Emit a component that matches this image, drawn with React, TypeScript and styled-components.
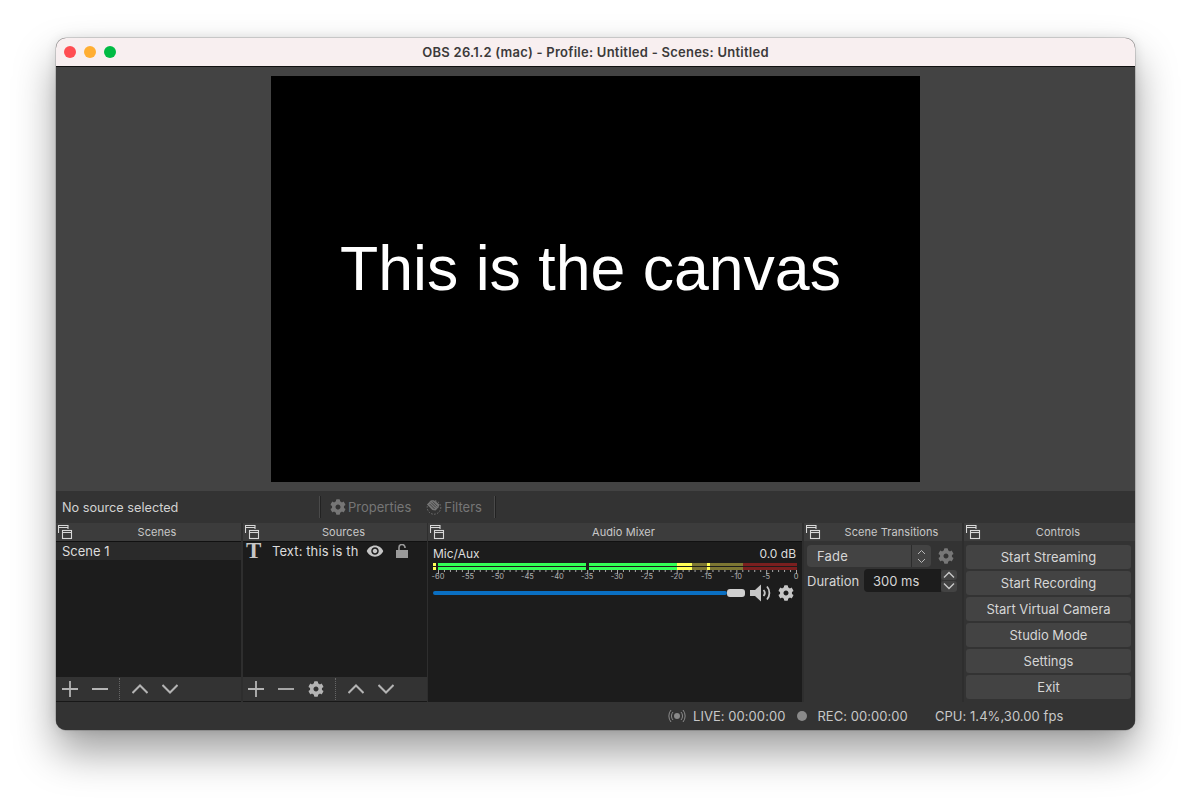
import React from "react";
import styled, { createGlobalStyle } from "styled-components";
import { FaCog } from "react-icons/fa";
import { MdVisibility } from "react-icons/md";

const Global = createGlobalStyle`
  html, body { margin: 0; padding: 0; background: #fff; }
  body { width: 1191px; height: 804px; overflow: hidden; font-family: Inter, "Liberation Sans", sans-serif; }
`;
const Page = styled.div`
  padding: 38px 56px 0;
  width: 1191px;
  height: 804px;
  box-sizing: border-box;
`;
const Win = styled.div`
  width: 1079px;
  height: 692px;
  border-radius: 10px;
  overflow: hidden;
  display: flex;
  flex-direction: column;
  box-shadow: 0 0 0 0.5px rgba(0,0,0,.28), 0 22px 42px rgba(0,0,0,.38), 0 0 12px rgba(0,0,0,.1);
  background: #333;
`;
const TitleBar = styled.div`
  height: 28px;
  flex: none;
  background: #f8eff0;
  border-bottom: 1px solid #111;
  position: relative;
  display: flex;
  align-items: center;
  justify-content: center;
  font-size: 13px;
  letter-spacing: .25px;
  font-weight: 600;
  color: #3c3a3a;
`;
const Lights = styled.div`
  position: absolute;
  left: 8px;
  top: 8px;
  display: flex;
  gap: 8px;
`;
const Light = styled.span<{ $c: string }>`
  width: 12px;
  height: 12px;
  border-radius: 50%;
  background: ${p => p.$c};
`;
const Preview = styled.div`
  height: 424px;
  flex: none;
  background: #434343;
  box-sizing: border-box;
  padding-top: 9px;
  display: flex;
  justify-content: center;
  align-items: flex-start;
`;
const Canvas = styled.div`
  width: 649px;
  height: 406px;
  background: #000;
  color: #fff;
  font-family: "Liberation Sans", Arial, sans-serif;
  font-size: 62.6px;
  display: flex;
  justify-content: center;
  align-items: center;
  padding: 0 10px 23px 0;
  box-sizing: border-box;
`;
const ContextBar = styled.div`
  height: 32px;
  flex: none;
  background: #333;
  display: flex;
  align-items: center;
  font-size: 13px;
  color: #d2d2d2;
  padding: 0 0 0 6px;
  box-sizing: border-box;
`;
const ContextLabel = styled.span`
  width: 257px;
  flex: none;
  white-space: nowrap;
  font-size: 12.7px;
`;
const Grip = styled.span<{ $ml?: number }>`
  width: 2px;
  height: 22px;
  flex: none;
  box-sizing: border-box;
  background: #222;
  border-left: 1px solid #4a4a4a;
  margin-left: ${p => p.$ml ?? 0}px;
`;
const DimBtn = styled.span<{ $ml: number }>`
  display: flex;
  align-items: center;
  gap: 2px;
  color: #767676;
  margin-left: ${p => p.$ml}px;
  svg { color: #767676; flex: none; }
`;
const Docks = styled.div`
  height: 179px;
  flex: none;
  display: flex;
  background: #2e2e2e;
`;
const Dock = styled.div<{ $w: number; $gap: number }>`
  width: ${p => p.$w}px;
  margin-right: ${p => p.$gap}px;
  flex: none;
  display: flex;
  flex-direction: column;
`;
const DockTitle = styled.div`
  height: 18px;
  flex: none;
  background: #3c3c3c;
  position: relative;
  display: flex;
  align-items: center;
  justify-content: center;
  font-size: 11px;
  letter-spacing: .07px;
  color: #c8c8c8;
  padding-left: 17px;
  box-sizing: border-box;
`;
const FloatIcon = styled.svg`
  position: absolute;
  left: 2px;
  top: 1px;
`;
const ListBody = styled.div`
  height: 136px;
  flex: none;
  background: #1c1c1c;
  border-top: 1px solid #111;
  box-sizing: border-box;
  font-size: 13px;
  color: #dcdcdc;
`;
const SceneRow = styled.div`
  height: 18px;
  background: #2a2a2a;
  display: flex;
  align-items: center;
  padding-left: 6px;
`;
const SourceRow = styled.div`
  height: 18px;
  display: flex;
  align-items: center;
  padding-left: 3px;
`;
const TGlyph = styled.span`
  font-family: "Liberation Serif", serif;
  font-weight: 700;
  font-size: 23px;
  line-height: 18px;
  color: #c6c6c6;
  width: 26px;
  flex: none;
`;
const SourceName = styled.span`
  width: 86px;
  overflow: hidden;
  white-space: nowrap;
  flex: none;
  letter-spacing: .1px;
`;
const RowIcons = styled.span`
  display: flex;
  align-items: center;
  gap: 12px;
  margin-left: 8px;
  color: #c6c6c6;
`;
const Toolbar = styled.div<{ $shift?: boolean }>`
  height: 25px;
  flex: none;
  background: #333;
  border-bottom: 1px solid #181818;
  box-sizing: border-box;
  display: flex;
  align-items: center;
  gap: 2px;
  color: #b4b4b4;
  & > :first-child { margin-left: ${p => (p.$shift ? -1 : 0)}px; }
`;
const ToolBtn = styled.span`
  width: 28px;
  height: 24px;
  flex: none;
  display: flex;
  align-items: center;
  justify-content: center;
`;
const ToolSep = styled.span`
  width: 0;
  height: 22px;
  border-left: 1px dotted #666;
  margin: 0 4px 0 3px;
  flex: none;
`;
const MixerBody = styled.div`
  height: 161px;
  flex: none;
  background: #1c1c1c;
  border-top: 1px solid #111;
  box-sizing: border-box;
  padding: 4px 5px 0;
  color: #dcdcdc;
  font-size: 12px;
`;
const MixerHead = styled.div`
  display: flex;
  justify-content: space-between;
  line-height: 15px;
  padding-right: 1px;
  margin-bottom: 1px;
`;
const SliderRow = styled.div`
  display: flex;
  align-items: center;
  height: 18px;
  margin-top: 2px;
  color: #c6c6c6;
`;
const Track = styled.div`
  width: 294px;
  height: 4px;
  border-radius: 2px;
  background: #0a6fc2;
  flex: none;
`;
const Handle = styled.div`
  width: 18px;
  height: 8px;
  border-radius: 3px;
  background: #cfcfcf;
  flex: none;
  margin-right: 5px;
`;
const GearSlot = styled.span`
  display: flex;
  margin-left: 6px;
`;
const SidePanel = styled.div`
  flex: 1;
  background: #333;
  display: flex;
  flex-direction: column;
  font-size: 13px;
  color: #d6d6d6;
`;
const TransRow = styled.div`
  display: flex;
  align-items: center;
  padding: 4px 0 0 3px;
`;
const SelectBox = styled.div`
  width: 124px;
  height: 22px;
  border-radius: 4px;
  background: #434343;
  display: flex;
  align-items: center;
  padding-left: 10px;
  box-sizing: border-box;
  position: relative;
  letter-spacing: .2px;
`;
const SelectArrows = styled.span`
  position: absolute;
  right: 0;
  top: 0;
  width: 20px;
  height: 22px;
  border-left: 1px solid #2c2c2c;
  box-sizing: border-box;
  display: flex;
  align-items: center;
  justify-content: center;
  color: #b8b8b8;
`;
const TransGear = styled.span`
  display: flex;
  margin-left: 7px;
  color: #777;
`;
const DurationRow = styled.div`
  display: flex;
  align-items: center;
  margin: 2px 0 0 3px;
`;
const DurationLabel = styled.span`
  width: 57px;
  flex: none;
`;
const Spin = styled.div`
  width: 77px;
  height: 23px;
  background: #1c1c1c;
  border-radius: 4px 0 0 4px;
  display: flex;
  align-items: center;
  padding-left: 9px;
  box-sizing: border-box;
  flex: none;
`;
const SpinBtns = styled.div`
  display: flex;
  flex-direction: column;
  gap: 1px;
`;
const SpinBtn = styled.span`
  width: 16px;
  height: 10.5px;
  background: #434343;
  border-radius: 3px;
  display: flex;
  align-items: center;
  justify-content: center;
  color: #c8c8c8;
`;
const ControlsCol = styled.div`
  display: flex;
  flex-direction: column;
  gap: 2px;
  padding: 4px 4px 0 2px;
`;
const CtlBtn = styled.div`
  height: 24px;
  background: #434343;
  border-radius: 3px;
  display: flex;
  align-items: center;
  justify-content: center;
  color: #d6d6d6;
`;
const Status = styled.div`
  height: 28px;
  flex: none;
  background: #333;
  display: flex;
  align-items: center;
  font-size: 13px;
  color: #c8c8c8;
  padding-left: 612px;
  box-sizing: border-box;
`;
const StatusDot = styled.span`
  width: 10px;
  height: 10px;
  border-radius: 50%;
  background: #8a8a8a;
  margin: 0 10px 0 12px;
  flex: none;
`;
const StatusText = styled.span<{ $ml?: number }>`
  margin-left: ${p => p.$ml ?? 0}px;
  white-space: nowrap;
  letter-spacing: .05px;
`;

const DockFloat = () => (
  <FloatIcon width="15" height="16" viewBox="0 0 15 16" fill="none" stroke="#d8d8d8" strokeWidth="1.1">
    <path d="M.5 9V1.5h9.5V5" />
    <path d="M.5 3.5h9.5" />
    <rect x="4.5" y="6.5" width="9" height="8" fill="#3c3c3c" />
    <path d="M4.5 8.5h9" />
  </FloatIcon>
);
const Plus = () => (
  <svg width="16" height="16" viewBox="0 0 16 16" stroke="currentColor" strokeWidth="1.8"><path d="M8 0v16M0 8h16" /></svg>
);
const Minus = () => (
  <svg width="16" height="16" viewBox="0 0 16 16" stroke="currentColor" strokeWidth="1.8"><path d="M0 8h16" /></svg>
);
const Up = () => (
  <svg width="16" height="16" viewBox="0 0 16 16" fill="none" stroke="currentColor" strokeWidth="2"><path d="M.5 12L8 4.5 15.5 12" /></svg>
);
const Down = () => (
  <svg width="16" height="16" viewBox="0 0 16 16" fill="none" stroke="currentColor" strokeWidth="2"><path d="M.5 4L8 11.5 15.5 4" /></svg>
);
const Lock = () => (
  <svg width="12" height="14" viewBox="0 0 12 14" style={{ color: "#9a9a9a" }}>
    <path d="M3 6.5V3.6A3 3 0 0 1 9 3.4V4" fill="none" stroke="currentColor" strokeWidth="1.6" />
    <rect x="0" y="6" width="12" height="8" fill="currentColor" />
  </svg>
);
const FilterIcon = () => (
  <svg width="16" height="16" viewBox="0 0 16 16" fill="none">
    <path d="M1 5.5L5 1.2l4 .6 4.5 4-1 2.5-3 3.2-3.2-.6z" fill="#767676" />
    <path d="M5 3.5l5 5M3.6 5l5 5M6.6 2.4l5 5" stroke="#333" strokeWidth=".8" />
    <circle cx="8" cy="8.4" r="6.8" stroke="#767676" strokeDasharray="1.4 1.6" />
  </svg>
);
const Speaker = () => (
  <svg width="22" height="18" viewBox="0 0 22 18" fill="none" stroke="currentColor">
    <path d="M0 6h5l6-5.5v17L5 12H0z" fill="currentColor" stroke="none" />
    <path d="M13.5 6a4.5 4.5 0 0 1 0 6" strokeWidth="1.8" />
    <path d="M17 2.5a10 10 0 0 1 0 13" strokeWidth="1.8" />
  </svg>
);
const SmallArrows = () => (
  <svg width="9" height="15" viewBox="0 0 9 15" fill="none" stroke="currentColor" strokeWidth="1"><path d="M1 5l3.5-3.5L8 5M1 10l3.5 3.5L8 10" /></svg>
);
const SpinUp = () => (
  <svg width="12" height="8" viewBox="0 0 12 8" fill="none" stroke="currentColor" strokeWidth="1.4"><path d="M1 6.5L6 1.5l5 5" /></svg>
);
const SpinDown = () => (
  <svg width="12" height="8" viewBox="0 0 12 8" fill="none" stroke="currentColor" strokeWidth="1.4"><path d="M1 1.5l5 5 5-5" /></svg>
);
const LiveIcon = () => (
  <svg width="18" height="14" viewBox="0 0 18 14" fill="none" stroke="#8a8a8a" strokeWidth="1">
    <circle cx="9" cy="7" r="3" fill="#8a8a8a" stroke="none" />
    <path d="M5 3a6 6 0 0 0 0 8M13 3a6 6 0 0 1 0 8M3 1a9.5 9.5 0 0 0 0 12M15 1a9.5 9.5 0 0 1 0 12" />
  </svg>
);

const tickX = (db: number) => 5 + ((db + 60) / 60) * 358;
const labels = [-60, -55, -50, -45, -40, -35, -30, -25, -20, -15, -10, -5, 0];
const ticks = Array.from({ length: 61 }, (_, i) => i - 60);
const segs: [number, number, string][] = [
  [0, 3, "#ffff55"], [5, 153, "#33ff55"], [156, 244, "#33ff55"], [244, 259, "#ffff55"],
  [259, 274, "#7d7733"], [274, 277, "#ffff55"], [277, 310, "#7d7733"], [310, 364, "#7b1f1f"],
];

const MeterSvg = styled.svg`
  display: block;
  overflow: visible;
`;

const Meter = () => (
  <MeterSvg width="364" height="20" viewBox="0 0 364 20">
    {segs.map(([a, b, c]) => (
      <g key={a} fill={c}>
        <rect x={a} y="1" width={b - a} height="3" />
        <rect x={a} y="5" width={b - a} height="3" />
      </g>
    ))}
    {ticks.map(t => (
      <rect key={t} x={tickX(t)} y="8" width="1" height={t % 5 === 0 ? 4 : 2} fill="#a8a8a8" />
    ))}
    {labels.map(l => (
      <text key={l} x={tickX(l)} y="17" fontSize="7.5" fill="#b0b0b0" textAnchor="middle" fontFamily="Inter, sans-serif">{l}</text>
    ))}
  </MeterSvg>
);

const App = () => (
  <Page>
    <Global />
    <Win>
      <TitleBar>
        <Lights>
          <Light $c="#ff4d52" /><Light $c="#ffae33" /><Light $c="#00bb44" />
        </Lights>
        OBS 26.1.2 (mac) - Profile: Untitled - Scenes: Untitled
      </TitleBar>
      <Preview><Canvas>This is the canvas</Canvas></Preview>
      <ContextBar>
        <ContextLabel>No source selected</ContextLabel>
        <Grip />
        <DimBtn $ml={9}><FaCog size={16} />Properties</DimBtn>
        <DimBtn $ml={15}><FilterIcon />Filters</DimBtn>
        <Grip $ml={12} />
      </ContextBar>
      <Docks>
        <Dock $w={185} $gap={2}>
          <DockTitle><DockFloat />Scenes</DockTitle>
          <ListBody><SceneRow>Scene 1</SceneRow></ListBody>
          <Toolbar>
            <ToolBtn><Plus /></ToolBtn><ToolBtn><Minus /></ToolBtn>
            <ToolSep />
            <ToolBtn><Up /></ToolBtn><ToolBtn><Down /></ToolBtn>
          </Toolbar>
        </Dock>
        <Dock $w={184} $gap={1}>
          <DockTitle><DockFloat />Sources</DockTitle>
          <ListBody>
            <SourceRow>
              <TGlyph>T</TGlyph>
              <SourceName>Text: this is th</SourceName>
              <RowIcons><MdVisibility size={18} /><Lock /></RowIcons>
            </SourceRow>
          </ListBody>
          <Toolbar $shift>
            <ToolBtn><Plus /></ToolBtn><ToolBtn><Minus /></ToolBtn><ToolBtn><FaCog size={16} /></ToolBtn>
            <ToolSep />
            <ToolBtn><Up /></ToolBtn><ToolBtn><Down /></ToolBtn>
          </Toolbar>
        </Dock>
        <Dock $w={374} $gap={2}>
          <DockTitle><DockFloat />Audio Mixer</DockTitle>
          <MixerBody>
            <MixerHead><span>Mic/Aux</span><span>0.0 dB</span></MixerHead>
            <Meter />
            <SliderRow>
              <Track /><Handle /><Speaker />
              <GearSlot><FaCog size={16} /></GearSlot>
            </SliderRow>
          </MixerBody>
        </Dock>
        <Dock $w={158} $gap={2}>
          <DockTitle><DockFloat />Scene Transitions</DockTitle>
          <SidePanel>
            <TransRow>
              <SelectBox>Fade<SelectArrows><SmallArrows /></SelectArrows></SelectBox>
              <TransGear><FaCog size={16} /></TransGear>
            </TransRow>
            <DurationRow>
              <DurationLabel>Duration</DurationLabel>
              <Spin>300 ms</Spin>
              <SpinBtns>
                <SpinBtn><SpinUp /></SpinBtn>
                <SpinBtn><SpinDown /></SpinBtn>
              </SpinBtns>
            </DurationRow>
          </SidePanel>
        </Dock>
        <Dock $w={171} $gap={0}>
          <DockTitle><DockFloat />Controls</DockTitle>
          <SidePanel>
            <ControlsCol>
              <CtlBtn>Start Streaming</CtlBtn>
              <CtlBtn>Start Recording</CtlBtn>
              <CtlBtn>Start Virtual Camera</CtlBtn>
              <CtlBtn>Studio Mode</CtlBtn>
              <CtlBtn>Settings</CtlBtn>
              <CtlBtn>Exit</CtlBtn>
            </ControlsCol>
          </SidePanel>
        </Dock>
      </Docks>
      <Status>
        <LiveIcon />
        <StatusText $ml={7}>LIVE: 00:00:00</StatusText>
        <StatusDot />
        <StatusText>REC: 00:00:00</StatusText>
        <StatusText $ml={27}>CPU: 1.4%,30.00 fps</StatusText>
      </Status>
    </Win>
  </Page>
);

export default App;
